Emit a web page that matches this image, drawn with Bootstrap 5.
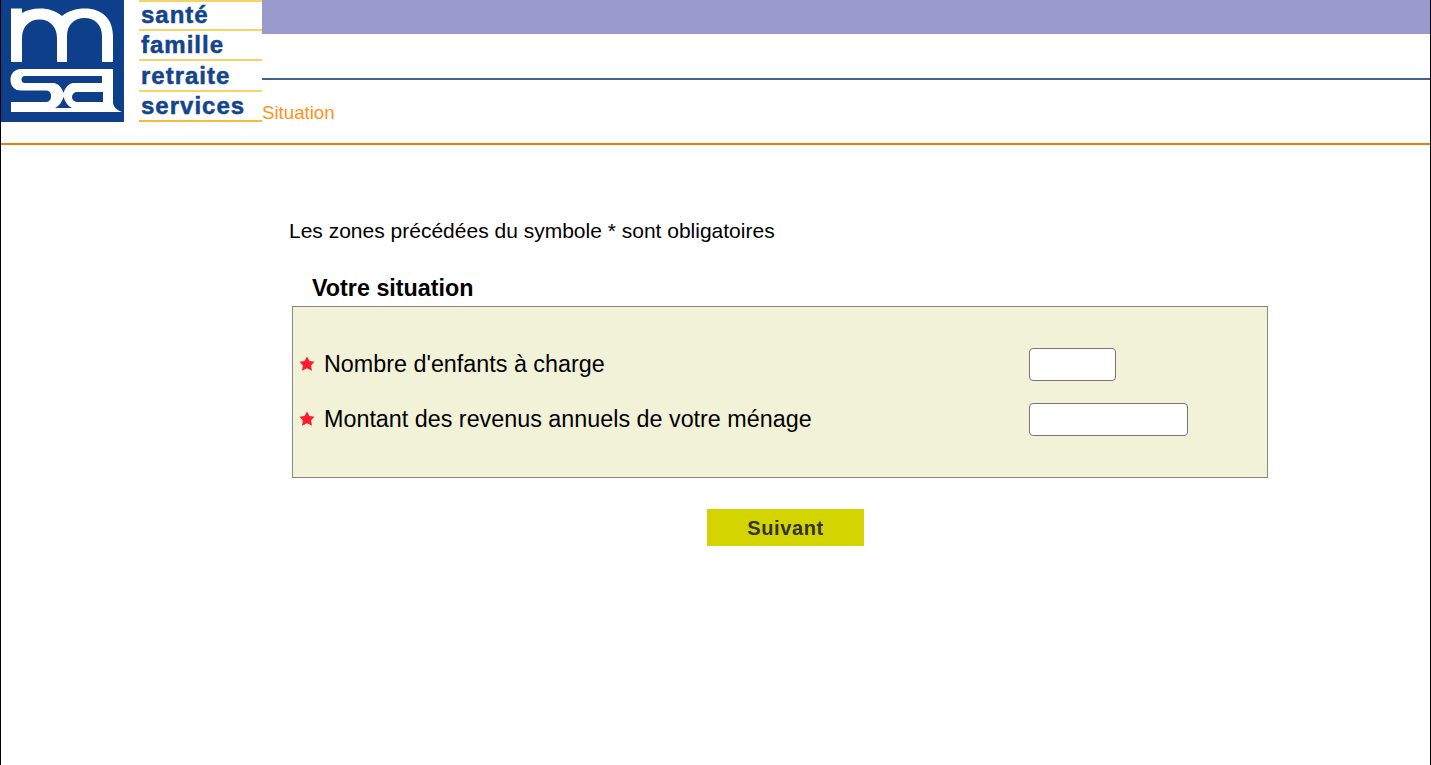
<!DOCTYPE html>
<html lang="fr">
<head>
<meta charset="utf-8">
<title>MSA - Situation</title>
<link href="https://cdn.jsdelivr.net/npm/bootstrap@5.3.0/dist/css/bootstrap.min.css" rel="stylesheet">
<style>
html,body{height:100%;}
body{font-family:"Liberation Sans",Arial,sans-serif;color:#000;background:#fff;}
.page-frame{min-height:765px;height:765px;overflow:hidden;border-left:1px solid #000;border-right:1px solid #000;}
.site-head{height:145px;border-bottom:2px solid #e47f14;}
.logo-mark{width:123px;height:122px;display:block;flex:none;filter:blur(.35px);}
.tagline{width:123px;margin-left:15px;height:122px;flex:none;}
.tagline-row{height:30px;border-bottom:2px solid #fad26a;font-weight:700;font-size:24px;line-height:28px;color:#14448c;padding-left:2px;letter-spacing:1px;-webkit-text-stroke:.5px #14448c;white-space:nowrap;}
.tagline-row:nth-child(odd){height:31px;}
.tagline-row:first-child{border-top:2px solid #fad26a;line-height:26px;}
.tagline-row:nth-child(3){line-height:29px;}
.tagline-row:last-child{border-bottom-color:#f5bd3c;}
.head-bar{height:34px;background:#9999cc;}
.head-gap{height:46px;border-bottom:2px solid #3f6488;}
.crumb{color:#ff9416;font-size:18.67px;line-height:21px;padding-top:22px;}
.notice{font-size:21px;line-height:23px;margin:74px 0 0 288px;}
.legend-title{font-size:23.33px;font-weight:700;line-height:25px;margin:34px 0 0 311px;}
.form-panel{width:976px;height:172px;margin:5px 0 0 291px;padding:41px 0 0 7px;background:#f2f2d9;border:1px solid #8b8680;}
.form-line{height:33px;margin-bottom:22px;}
.req{width:24px;flex:none;display:block;}
.req svg{display:block;width:16px;height:16px;filter:blur(.35px);margin:-2px 0 0 -1px;}
.form-line label{width:705px;margin:0;font-size:23.33px;line-height:33px;flex:none;}
.plain-input{height:33px;border:1px solid #767676;border-radius:4px;background:#fff;padding:1px 2px;display:block;}
.in-small{width:87px;}
.in-large{width:159px;}
.next-btn{width:157px;height:37px;margin:31px 0 0 706px;background:#d4d400;border:0;border-radius:0;font-size:20px;font-weight:700;color:#333;letter-spacing:.6px;padding:0;display:block;}
.next-btn:hover,.next-btn:active{background:#d4d400!important;color:#333!important;}
</style>
</head>
<body>
<div class="page-frame">
  <header class="site-head d-flex">
    <svg class="logo-mark" viewBox="1 0 123 122" role="img" aria-label="MSA">
      <rect x="1" width="123" height="122" fill="#0e3f8a"/>
      <path fill="#fff" d="M11 8.500H22V13C27 10 33 8.500 40 8.500C49 8.500 56 11 62 16C68 11 76 8.500 85 8.500C102 8.500 113 19 113 36V62H102V36C102 25 95 18 84.500 18C74 18 67 25 67 36V62H57V38C57 27 50 19.500 39.500 19.500C29 19.500 22 27 22 38V62H11Z"/>
      <path fill="#fff" fill-rule="evenodd" d="M21 69H113V103C114 108 117 110 122 112H11V102H45C49 102 51 100 51 96C51 92 49 90.500 45 90.500H21C14 90.500 10.500 85.500 10.500 80C10.500 74 14 69 21 69ZM25 76A3.500 3.500 0 0 0 25 83H102V76ZM77 92A5 5 0 0 0 77 102H103V92Z"/>
      <path fill="#0e3f8a" d="M54 83C59 84 62 88 63.500 93C65 88 68 84 73 83ZM63.500 97C62 102 59 106 55 108H72C68 106 65 102 63.500 97Z"/>
    </svg>
    <div class="tagline">
      <div class="tagline-row">santé</div>
      <div class="tagline-row">famille</div>
      <div class="tagline-row">retraite</div>
      <div class="tagline-row">services</div>
    </div>
    <div class="flex-grow-1">
      <div class="head-bar"></div>
      <div class="head-gap"></div>
      <div class="crumb">Situation</div>
    </div>
  </header>
  <main>
    <p class="notice mb-0">Les zones précédées du symbole * sont obligatoires</p>
    <h2 class="legend-title mb-0">Votre situation</h2>
    <form class="form-panel">
      <div class="form-line d-flex align-items-center">
        <span class="req"><svg viewBox="0 0 15 15"><path fill="#ff1a2e" d="M7.500 .5 9.800 4.600 14.500 5.500 11.300 9 12.200 13.800 7.500 11.500 2.800 13.800 3.700 9 .5 5.500 5.200 4.600Z"/></svg></span>
        <label for="nb-enfants">Nombre d'enfants à charge</label>
        <input id="nb-enfants" class="plain-input in-small" type="text">
      </div>
      <div class="form-line d-flex align-items-center">
        <span class="req"><svg viewBox="0 0 15 15"><path fill="#ff1a2e" d="M7.500 .5 9.800 4.600 14.500 5.500 11.300 9 12.200 13.800 7.500 11.500 2.800 13.800 3.700 9 .5 5.500 5.200 4.600Z"/></svg></span>
        <label for="revenus">Montant des revenus annuels de votre ménage</label>
        <input id="revenus" class="plain-input in-large" type="text">
      </div>
    </form>
    <button type="button" class="btn next-btn">Suivant</button>
  </main>
</div>
<script src="https://cdn.jsdelivr.net/npm/bootstrap@5.3.0/dist/js/bootstrap.bundle.min.js"></script>
</body>
</html>
